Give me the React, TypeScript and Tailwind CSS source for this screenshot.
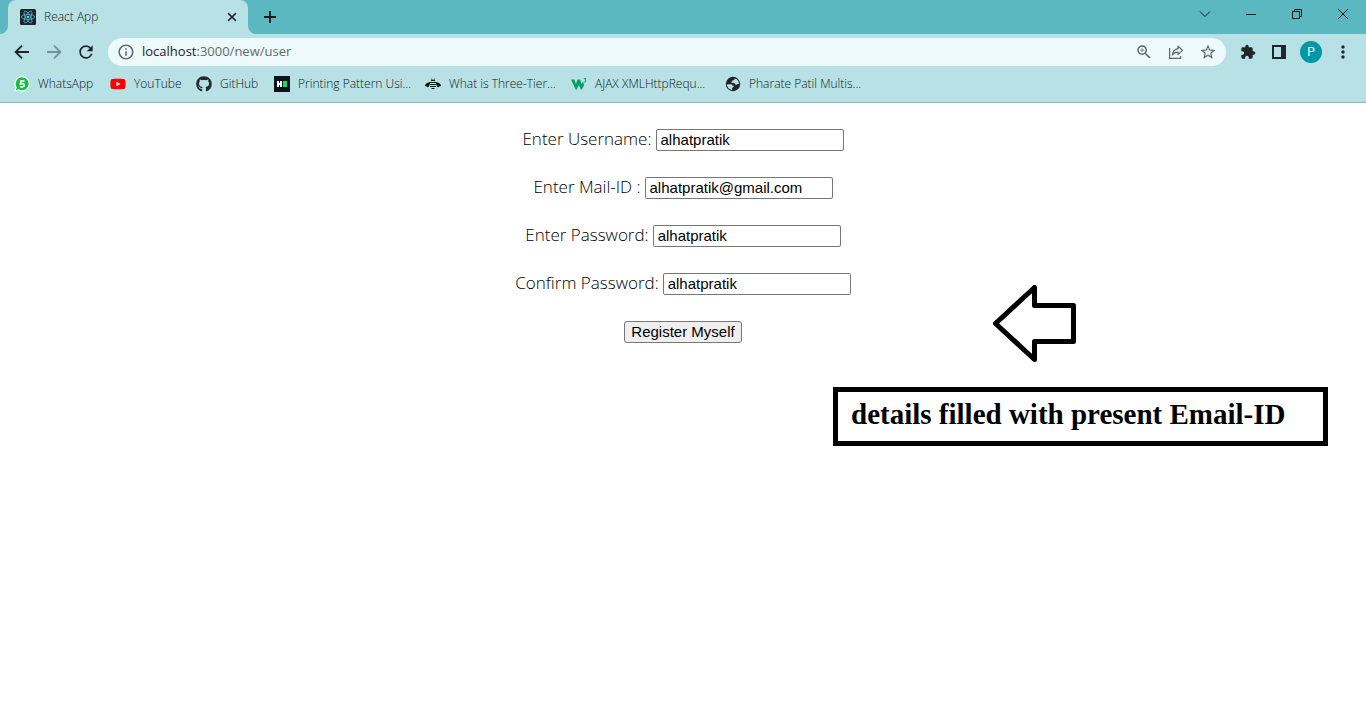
import { useState } from "react";
import type { ReactNode } from "react";
import { FaGithub, FaYoutube } from "react-icons/fa";
import { MdExtension, MdInfoOutline, MdMoreVert, MdRefresh, MdStarBorder, MdZoomIn } from "react-icons/md";

function ReactLogo() {
  return (
    <svg viewBox="0 0 16 16" className="size-4 shrink-0" aria-hidden="true">
      <rect width="16" height="16" rx="1.5" fill="#20232a" />
      <g fill="none" stroke="#53b8d2" strokeWidth="0.8">
        <ellipse cx="8" cy="8" rx="6.6" ry="2.5" />
        <ellipse cx="8" cy="8" rx="6.6" ry="2.5" transform="rotate(60 8 8)" />
        <ellipse cx="8" cy="8" rx="6.6" ry="2.5" transform="rotate(120 8 8)" />
      </g>
      <circle cx="8" cy="8" r="1.3" fill="#61dafb" />
    </svg>
  );
}

function WhatsAppIcon() {
  return (
    <svg viewBox="0 0 16 16" className="size-4 shrink-0" aria-hidden="true">
      <path d="M8.2 0.2a7.6 7.6 0 1 1-3.7 14.3L0.2 15.8l1.3-4.2A7.6 7.6 0 0 1 8.2 0.2z" fill="#fff" />
      <path d="M8.2 1.3a6.5 6.5 0 1 1-3.5 12L1.8 14.2l1-2.8A6.5 6.5 0 0 1 8.2 1.3z" fill="#12c143" />
      <path d="M10.6 5H6.800l-.2 2.900c1.600-.8 3.800-.3 3.600 1.400-.2 1.600-2.300 2-4 1.100" fill="none" stroke="#fff" strokeWidth="1.7" />
    </svg>
  );
}

function HackerRankIcon() {
  return (
    <svg viewBox="0 0 16 16" className="size-4 shrink-0" aria-hidden="true">
      <rect width="16" height="16" fill="#0e141e" />
      <path d="M3 5h2v2h1V5h2v6H6V9H5v2H3z" fill="#fff" />
      <rect x="9" y="5" width="4" height="6" fill="#05e165" />
    </svg>
  );
}

function BeeIcon() {
  return (
    <svg viewBox="0 0 16 16" className="size-4 shrink-0" aria-hidden="true">
      <path d="M5 6.200C3 6 .3 7.600 0 9.400c-.1 1 .8 1.200 1.400.7 0 1.400 1.800 1.500 2.500.4L5 7.800z" fill="#0f1415" />
      <path d="M11 6.200c2-.2 4.700 1.400 5 3.200.1 1-.8 1.200-1.400.7 0 1.400-1.800 1.500-2.500.4L11 7.800z" fill="#0f1415" />
      <path d="M6.300 2.600l1 1.400M9.700 2.600l-1 1.400" stroke="#171c1d" strokeWidth="0.9" />
      <path d="M6 4.500h4M4.500 6.500h7M5 8.500h6M5 10.500h6M6.500 12.500h3" stroke="#171c1d" strokeWidth="1.1" />
    </svg>
  );
}

function W3Icon() {
  return (
    <svg viewBox="0 0 16 16" className="size-4 shrink-0" aria-hidden="true">
      <path d="M0 3.600h3.400l1.500 4.300 1.600-4.300h2.600l1.500 4.300 1.200-2.300 1.400 3.300-2.400 4.600h-1L7.700 9l-2 4.500h-1z" fill="#04a06b" />
      <path d="M12.700 2.600h2.200l-1.100 1.500c1.900.2 1.400 2.500-1.100 1.800" fill="none" stroke="#04a06b" strokeWidth="1" />
    </svg>
  );
}

function GlobeIcon() {
  return (
    <svg viewBox="0 0 16 16" className="size-4 shrink-0" aria-hidden="true">
      <circle cx="8" cy="8" r="7.2" fill="#202326" />
      <path d="M2 8.200h3.700c1.200 0 1.900.6 1.900 1.500h1.200c.2 1.200-.5 1.800-1.500 1.800l-.2 2.400C4.200 13.600 1.800 11.200 2 8.200z" fill="#b7e1e4" />
      <path d="M9.800 2.400c-.2 1.400-1 1.700-2.300 1.800-.1 1.100-.5 1.500-1.500 1.600.3 1 .8 1.200 2.200 1.100 1.500-.1 2.100.7 2.300 2 1.200-.2 1.700-.9 3.500-.9.200-2.700-1.500-4.900-4.200-5.600z" fill="#b7e1e4" />
    </svg>
  );
}

function Arrow({ forward = false }: { forward?: boolean }) {
  return (
    <svg viewBox="0 0 16 16" className="size-4" fill="none" stroke="currentColor" strokeWidth="1.8" aria-hidden="true">
      {forward ? <path d="M1 8h13M8 1.600L14.400 8 8 14.400" /> : <path d="M15 8H2M8 1.600L1.600 8 8 14.400" />}
    </svg>
  );
}

const bookmarks: { label: string; width: string; icon: ReactNode }[] = [
  { label: "WhatsApp", width: "w-20", icon: <WhatsAppIcon /> },
  {
    label: "YouTube",
    width: "w-[70px]",
    icon: (
      <span className="relative flex size-4 shrink-0 items-center justify-center">
        <span className="absolute h-2 w-2 bg-white" />
        <FaYoutube className="relative size-4 text-[#ff0000]" />
      </span>
    ),
  },
  { label: "GitHub", width: "w-[62px]", icon: <FaGithub className="size-4 shrink-0 text-[#24292f]" /> },
  { label: "Printing Pattern Usi...", width: "w-[135px]", icon: <HackerRankIcon /> },
  { label: "What is Three-Tier...", width: "w-[130px]", icon: <BeeIcon /> },
  { label: "AJAX XMLHttpRequ...", width: "w-[138px]", icon: <W3Icon /> },
  { label: "Pharate Patil Multis...", width: "w-[135px]", icon: <GlobeIcon /> },
];

function TabStrip() {
  return (
    <div className="flex h-[34px] items-stretch bg-[#5bb8c1] text-[#111a1c]">
      <div className="w-2 bg-[#b7e1e4]">
        <div className="h-full rounded-br-lg bg-[#5bb8c1]" />
      </div>
      <div className="flex w-60 items-center gap-2 rounded-t-lg bg-[#b7e1e4] pr-2 pl-3">
        <ReactLogo />
        <span className="grow text-[12px] font-light text-[#0c1a1c]">React App</span>
        <button aria-label="Close tab" className="flex size-4 items-center justify-center">
          <svg viewBox="0 0 10 10" className="size-[10px]" stroke="currentColor" strokeWidth="1.6">
            <path d="M1.200 1.200l7.600 7.600M8.800 1.200L1.200 8.800" />
          </svg>
        </button>
      </div>
      <div className="w-2 bg-[#b7e1e4]">
        <div className="h-full rounded-bl-lg bg-[#5bb8c1]" />
      </div>
      <button aria-label="New tab" className="flex w-7 items-center justify-center">
        <svg viewBox="0 0 12 12" className="size-3" stroke="currentColor" strokeWidth="1.8">
          <path d="M6 0v12M0 6h12" />
        </svg>
      </button>
      <div className="ml-auto flex pb-[6px]">
        <button aria-label="Search tabs" className="flex w-[46px] items-center justify-center">
          <svg viewBox="0 0 12 8" className="h-2 w-3" fill="none" stroke="currentColor">
            <path d="M1 1.500l5 5 5-5" />
          </svg>
        </button>
        <button aria-label="Minimize" className="flex w-[46px] items-center justify-center">
          <svg viewBox="0 0 10 10" className="size-[10px]" stroke="currentColor">
            <path d="M0 5.500h10" />
          </svg>
        </button>
        <button aria-label="Restore" className="flex w-[46px] items-center justify-center">
          <svg viewBox="0 0 10 10" className="size-[10px]" fill="none" stroke="currentColor">
            <path d="M.5 2.500h7v7h-7zM2.500 2V.5h7v7H8" />
          </svg>
        </button>
        <button aria-label="Close window" className="flex w-[46px] items-center justify-center">
          <svg viewBox="0 0 10 10" className="size-[10px]" stroke="currentColor">
            <path d="M0 0l10 10M10 0L0 10" />
          </svg>
        </button>
      </div>
    </div>
  );
}

function Toolbar() {
  return (
    <div className="flex h-9 items-center pr-[11px] pl-3 text-[#202629]">
      <div className="flex gap-3 pr-3">
        <button aria-label="Back" className="flex size-5 items-center justify-center">
          <Arrow />
        </button>
        <button aria-label="Forward" className="flex size-5 items-center justify-center text-[#789397]">
          <Arrow forward />
        </button>
        <button aria-label="Reload" className="flex size-5 items-center justify-center">
          <MdRefresh className="size-5 shrink-0" />
        </button>
      </div>
      <div className="flex h-7 grow items-center gap-[14px] rounded-full bg-[#edf9fa] px-[9px] text-[#5b6769]">
        <div className="flex grow items-center gap-[7px]">
          <MdInfoOutline className="size-[18px]" />
          <span className="text-[13px] text-[#5f6b6d]">
            <span className="text-[#202629]">localhost</span>:3000/new/user
          </span>
        </div>
        <button aria-label="Zoom">
          <MdZoomIn className="size-[18px]" />
        </button>
        <button aria-label="Share" className="flex size-[18px] items-center justify-center">
          <svg viewBox="0 0 16 16" className="size-4" fill="none" stroke="currentColor" strokeWidth="1.2">
            <path d="M1.600 4v10.400h11V12" />
            <path d="M10 2.200l4.600 4.200L10 10.600V8.200c-2.600 0-4.400.9-5.700 2.800.5-3.300 2.400-5.700 5.700-6.300z" strokeLinejoin="round" />
          </svg>
        </button>
        <button aria-label="Bookmark this page">
          <MdStarBorder className="size-[18px]" />
        </button>
      </div>
      <div className="flex items-center gap-[9px] pl-3">
        <button aria-label="Extensions" className="flex size-5 items-center justify-center">
          <MdExtension className="size-4" />
        </button>
        <button aria-label="Side panel" className="flex size-6 items-center justify-center">
          <svg viewBox="0 0 14 14" className="size-[14px]">
            <path d="M0 0h14v14H0zM2 2v10h7V2z" fill="currentColor" fillRule="evenodd" />
          </svg>
        </button>
        <button aria-label="Profile" className="flex size-[22px] items-center justify-center rounded-full bg-[#0097a7] font-['Roboto',sans-serif] text-[12px] text-white">
          P
        </button>
        <button aria-label="Menu" className="flex size-6 items-center justify-center">
          <MdMoreVert className="size-5" />
        </button>
      </div>
    </div>
  );
}

function BookmarksBar() {
  return (
    <nav className="flex h-8 items-center gap-4 overflow-hidden px-[14px] pb-1">
      {bookmarks.map(({ label, width, icon }) => (
        <a key={label} href="#" className={`flex shrink-0 items-center gap-2 text-[12px] font-light whitespace-nowrap text-[#0c1a1c] ${width}`}>
          {icon}
          {label}
        </a>
      ))}
    </nav>
  );
}

function Field({ id, label, initial }: { id: string; label: string; initial: string }) {
  const [value, setValue] = useState(initial);
  return (
    <div className="flex h-[22px] items-center justify-center gap-1">
      <label htmlFor={id} className="pb-[2px] text-[17px] leading-5 font-light whitespace-nowrap">
        {label}
      </label>
      <input
        id={id}
        type="text"
        value={value}
        onChange={(event) => setValue(event.target.value)}
        className="h-[22px] w-[188px] rounded-xs border border-[#767676] bg-white px-1 font-['Liberation_Sans',sans-serif] text-[15px]"
      />
    </div>
  );
}

export default function App() {
  return (
    <div className="min-h-screen bg-white font-['Open_Sans',sans-serif] text-black">
      <header className="border-b border-[#8fb4b8] bg-[#b7e1e4]">
        <TabStrip />
        <Toolbar />
        <BookmarksBar />
      </header>
      <main className="relative">
        <form className="flex flex-col items-center gap-[26px] pt-[26px]" onSubmit={(event) => event.preventDefault()}>
          <Field id="username" label="Enter Username:" initial="alhatpratik" />
          <Field id="mail" label="Enter Mail-ID :" initial="alhatpratik@gmail.com" />
          <Field id="password" label="Enter Password:" initial="alhatpratik" />
          <Field id="confirm" label="Confirm Password:" initial="alhatpratik" />
          <button
            type="submit"
            className="h-[22px] rounded-[3px] border border-[#767676] bg-[#efefef] px-[6px] font-['Liberation_Sans',sans-serif] text-[15px] leading-5"
          >
            Register Myself
          </button>
        </form>
        <svg
          viewBox="0 0 84 78"
          className="absolute top-[182px] left-[993px] h-[78px] w-[84px]"
          fill="none"
          stroke="#000"
          strokeWidth="5"
          strokeLinejoin="round"
          aria-hidden="true"
        >
          <path d="M2.500 38.500L41.500 2.500v18h39v36h-39v18z" />
        </svg>
        <p className="absolute top-[284px] left-[833px] h-[59px] w-[495px] border-5 border-black px-[13px] pt-1 font-['Liberation_Serif',serif] text-[29px] leading-9 font-bold whitespace-nowrap">
          details filled with present Email-ID
        </p>
      </main>
    </div>
  );
}
